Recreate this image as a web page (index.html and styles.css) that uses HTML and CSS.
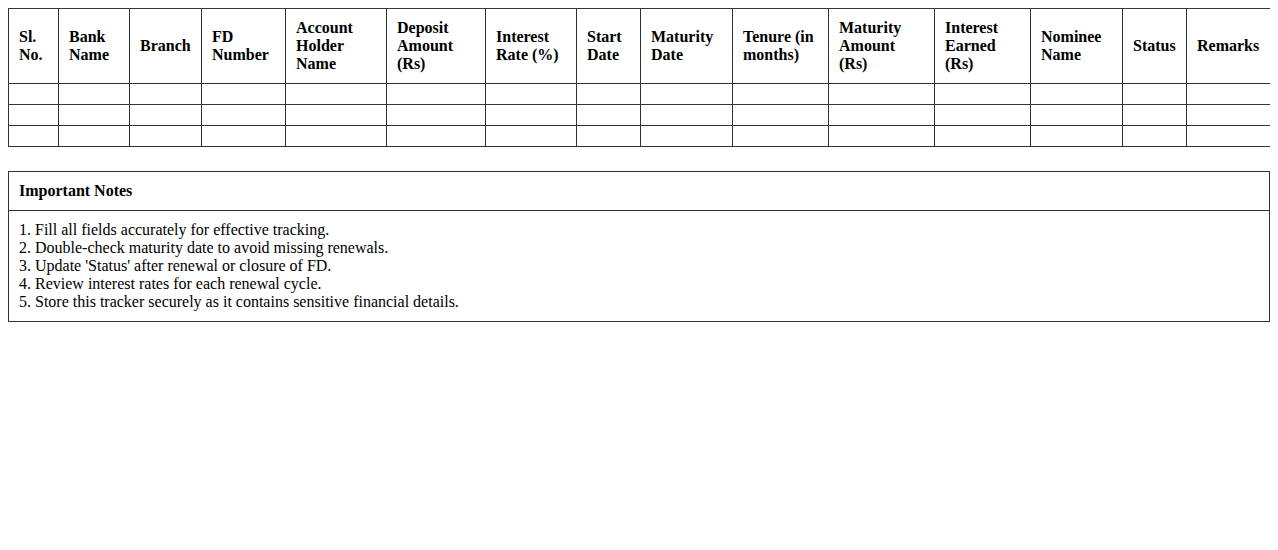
FILE: index.html
```html
<!DOCTYPE html>
<html>
<head>
<meta charset="utf-8">
<link rel="stylesheet" href="styles.css">
</head>
<body>
<table class="tracker">
  <colgroup>
    <col class="c-sl">
    <col class="c-bank">
    <col class="c-branch">
    <col class="c-fd">
    <col class="c-holder">
    <col class="c-deposit">
    <col class="c-rate">
    <col class="c-start">
    <col class="c-maturity">
    <col class="c-tenure">
    <col class="c-matamt">
    <col class="c-earned">
    <col class="c-nominee">
    <col class="c-status">
    <col class="c-remarks">
  </colgroup>
  <thead>
    <tr>
      <th>Sl.<br>No.</th>
      <th>Bank<br>Name</th>
      <th>Branch</th>
      <th>FD<br>Number</th>
      <th>Account<br>Holder<br>Name</th>
      <th>Deposit<br>Amount<br>(Rs)</th>
      <th>Interest<br>Rate (%)</th>
      <th>Start<br>Date</th>
      <th>Maturity<br>Date</th>
      <th>Tenure (in<br>months)</th>
      <th>Maturity<br>Amount<br>(Rs)</th>
      <th>Interest<br>Earned<br>(Rs)</th>
      <th>Nominee<br>Name</th>
      <th>Status</th>
      <th>Remarks</th>
    </tr>
  </thead>
  <tbody>
    <tr><td></td><td></td><td></td><td></td><td></td><td></td><td></td><td></td><td></td><td></td><td></td><td></td><td></td><td></td><td></td></tr>
    <tr><td></td><td></td><td></td><td></td><td></td><td></td><td></td><td></td><td></td><td></td><td></td><td></td><td></td><td></td><td></td></tr>
    <tr><td></td><td></td><td></td><td></td><td></td><td></td><td></td><td></td><td></td><td></td><td></td><td></td><td></td><td></td><td></td></tr>
  </tbody>
</table>

<div class="notes">
  <div class="notes-title">Important Notes</div>
  <div class="notes-body">
    1. Fill all fields accurately for effective tracking.<br>
    2. Double-check maturity date to avoid missing renewals.<br>
    3. Update 'Status' after renewal or closure of FD.<br>
    4. Review interest rates for each renewal cycle.<br>
    5. Store this tracker securely as it contains sensitive financial details.
  </div>
</div>
</body>
</html>
```

FILE: styles.css
```css
body {
  margin: 8px;
  font-family: "Liberation Serif", "Times New Roman", serif;
  font-size: 16px;
  line-height: 18px;
  color: #000;
  background: #fff;
}

.tracker {
  width: 100%;
  border-collapse: collapse;
  table-layout: fixed;
}

.c-sl { width: 50px; }
.c-bank { width: 71px; }
.c-branch { width: 72px; }
.c-fd { width: 84px; }
.c-holder { width: 101px; }
.c-deposit { width: 99px; }
.c-rate { width: 91px; }
.c-start { width: 64px; }
.c-maturity { width: 92px; }
.c-tenure { width: 96px; }
.c-matamt { width: 106px; }
.c-earned { width: 96px; }
.c-nominee { width: 92px; }
.c-status { width: 64px; }
.c-remarks { width: 84px; }

.tracker th,
.tracker td {
  border: 1px solid #333;
  padding: 10px;
  text-align: left;
  vertical-align: middle;
}

.tracker th {
  font-weight: bold;
}

.notes {
  margin-top: 24px;
  border: 1px solid #333;
}

.notes-title {
  font-weight: bold;
  padding: 10px;
  border-bottom: 1px solid #333;
}

.notes-body {
  padding: 10px;
}
```
